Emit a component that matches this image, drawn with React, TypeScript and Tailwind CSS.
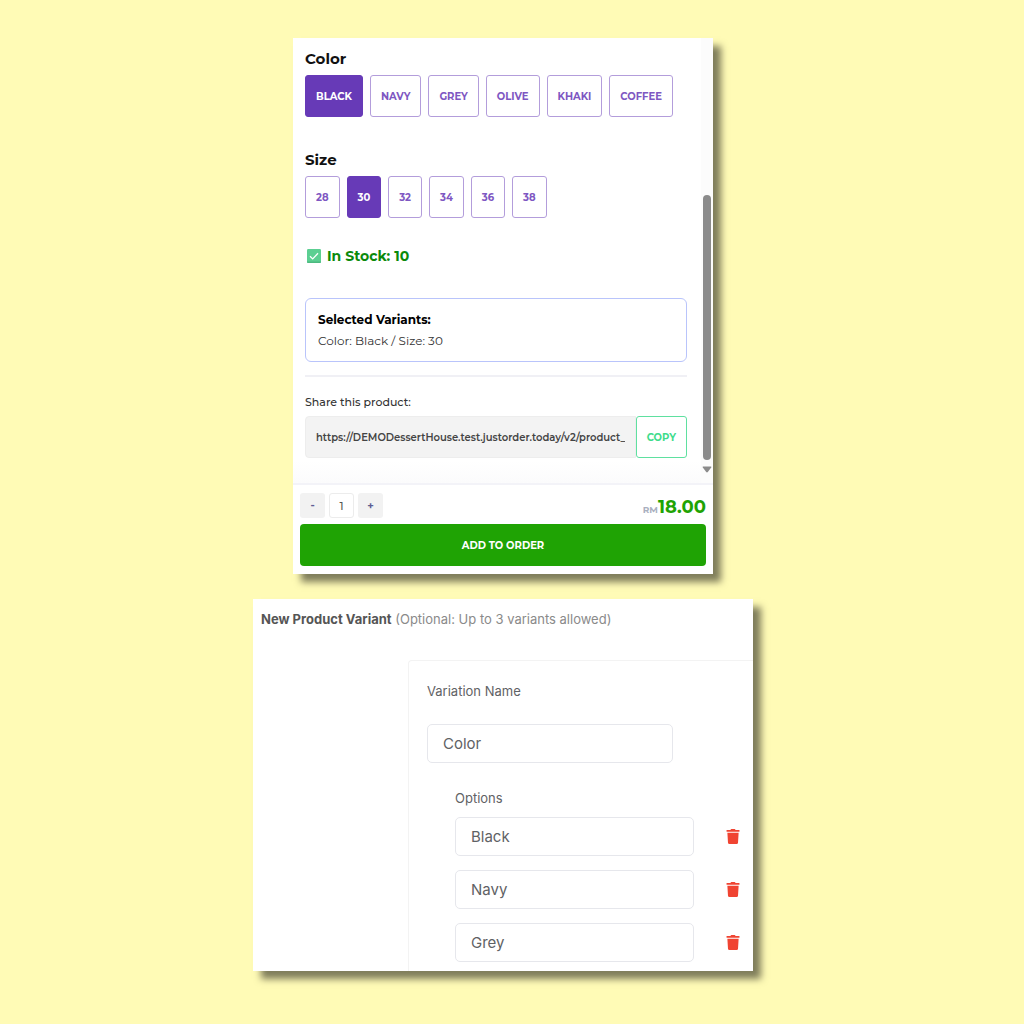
import { useState } from 'react';
import { FaTrash } from 'react-icons/fa';

const COLORS = ['Black', 'Navy', 'Grey', 'Olive', 'Khaki', 'Coffee'];
const SIZES = ['28', '30', '32', '34', '36', '38'];

type OptionGroupProps = {
  title: string;
  options: string[];
  selected: string;
  onSelect: (option: string) => void;
};

function OptionGroup({ title, options, selected, onSelect }: OptionGroupProps) {
  return (
    <section>
      <h2 className="text-[15px] leading-6 font-bold text-[#111111]">{title}</h2>
      <div className="mt-1 flex flex-wrap gap-[7px]">
        {options.map((option) => (
          <button
            key={option}
            type="button"
            aria-pressed={option === selected}
            onClick={() => onSelect(option)}
            className={`h-[42px] rounded-[3px] border px-2.5 text-[10px] font-bold uppercase ${
              option === selected
                ? 'border-[#673ab7] bg-[#673ab7] text-white'
                : 'border-[#b39ddb] bg-white text-[#7e57c2]'
            }`}
          >
            {option}
          </button>
        ))}
      </div>
    </section>
  );
}

function Scrollbar() {
  return (
    <div className="flex w-3 flex-col items-center bg-[#fcfcfc] pt-[157px] pb-2.5">
      <div className="w-2 flex-1 rounded-full bg-[#8b8b8b]" />
      <svg viewBox="0 0 10 7" className="mt-1.5 h-[7px] w-2.5" fill="#8b8b8b">
        <path d="M1.2 0.5h7.6q1 0 .4.9L5.8 6.1q-.8.9-1.6 0L.8 1.4Q.2.5 1.2.5z" />
      </svg>
    </div>
  );
}

function ProductCard() {
  const [color, setColor] = useState('Black');
  const [size, setSize] = useState('30');
  const [quantity, setQuantity] = useState(1);

  return (
    <div className="w-full max-w-[420px] bg-white font-[Montserrat,Inter,sans-serif] shadow-[8px_8px_7px_rgba(0,0,0,0.5)]">
      <div className="flex border-b-2 border-[#f3f3f8]">
        <div className="min-w-0 flex-1 bg-linear-to-t from-[#fbfbfc] via-white via-5% to-white pt-[9px] pr-3.5 pb-[25px] pl-3">
          <OptionGroup title="Color" options={COLORS} selected={color} onSelect={setColor} />
          <div className="mt-[31px]">
            <OptionGroup title="Size" options={SIZES} selected={size} onSelect={setSize} />
          </div>

          <p className="mt-7 flex items-center gap-1.5 pl-0.5 text-sm leading-5 font-bold text-[#0b8a0b]">
            <svg viewBox="0 0 14 14" className="h-3.5 w-3.5">
              <rect width="14" height="14" rx="1.2" fill="#5ccf92" />
              <path d="M0 12.6h14v.2q0 1.2-1.2 1.2H1.2Q0 14 0 12.8z" fill="#4cba80" />
              <path d="M3 7.3l2.7 2.6L11 4.3" fill="none" stroke="#fff" strokeWidth="1.3" />
            </svg>
            In Stock: 10
          </p>

          <div className="mt-8 rounded-md border border-[#b9c4fb] px-3 py-2.5 text-xs leading-[21px]">
            <p className="font-bold text-black">Selected Variants:</p>
            <p className="text-[#333333]">
              Color: {color} / Size: {size}
            </p>
          </div>

          <hr className="mt-[13px] border-t-2 border-[#f0f0f5]" />

          <label
            htmlFor="share-url"
            className="mt-[15px] block text-[11px] leading-5 font-medium text-[#333333]"
          >
            Share this product:
          </label>
          <div className="mt-1 flex">
            <input
              id="share-url"
              type="text"
              readOnly
              value="https://DEMODessertHouse.test.justorder.today/v2/product_"
              className="h-[42px] min-w-0 flex-1 rounded-l border border-[#ededed] bg-[#f3f3f3] px-2.5 text-[10px] font-semibold text-[#444444] outline-none"
            />
            <button
              type="button"
              className="h-[42px] rounded-[3px] border border-[#5fe0a0] bg-white px-2.5 text-[10px] font-bold text-[#3fdc8c]"
            >
              COPY
            </button>
          </div>
        </div>
        <Scrollbar />
      </div>

      <div className="px-[7px] pt-2 pb-2">
        <div className="flex items-start justify-between">
          <div className="flex gap-1 text-[11px]">
            <button
              type="button"
              aria-label="Decrease quantity"
              onClick={() => setQuantity(Math.max(1, quantity - 1))}
              className="h-[25px] w-[25px] rounded-[3px] bg-[#f2f2f2] font-bold text-[#5e5e94]"
            >
              -
            </button>
            <input
              type="text"
              aria-label="Quantity"
              value={quantity}
              onChange={(e) => setQuantity(Number(e.target.value) || 1)}
              className="h-[25px] w-[25px] rounded-[3px] border border-[#ececec] text-center font-medium text-[#555555] outline-none"
            />
            <button
              type="button"
              aria-label="Increase quantity"
              onClick={() => setQuantity(quantity + 1)}
              className="h-[25px] w-[25px] rounded-[3px] bg-[#f2f2f2] font-bold text-[#5e5e94]"
            >
              +
            </button>
          </div>
          <p className="text-lg leading-7 font-bold text-[#1fa304]">
            <span className="text-[9px] font-bold text-[#a9b0bf]">RM</span>18.00
          </p>
        </div>
        <button
          type="button"
          className="h-[42px] w-full rounded bg-[#1fa304] text-[10px] font-bold text-white"
        >
          ADD TO ORDER
        </button>
      </div>
    </div>
  );
}

function VariantForm() {
  return (
    <form className="w-full max-w-[500px] bg-white pt-2.5 font-[Inter,sans-serif] text-[13px] leading-5 text-[#5f6265] shadow-[8px_8px_7px_rgba(0,0,0,0.5)]">
      <h2 className="px-2 text-[#8a8a8a]">
        <span className="font-bold text-[#555555]">New Product Variant</span> (Optional: Up to 3
        variants allowed)
      </h2>
      <div className="mt-[31px] ml-[155px] rounded-tl border-t border-l border-[#f3f3f3] pt-5 pr-[13px] pb-[9px] pl-[18px]">
        <label htmlFor="variation-name" className="block">
          Variation Name
        </label>
        <input
          id="variation-name"
          type="text"
          defaultValue="Color"
          className="mt-[23px] block h-[39px] w-[246px] rounded-[5px] border border-[#e6e7ec] px-[15px] text-[15px] outline-none"
        />
        <fieldset className="mt-[25px] ml-7">
          <legend>Options</legend>
          <div className="mt-[9px] flex flex-col gap-3.5">
            {COLORS.slice(0, 3).map((option) => (
              <div key={option} className="flex items-center justify-between">
                <input
                  type="text"
                  aria-label={`Option ${option}`}
                  defaultValue={option}
                  className="h-[39px] w-[239px] rounded-[5px] border border-[#e6e7ec] px-[15px] text-[15px] outline-none"
                />
                <button type="button" aria-label={`Delete ${option}`} className="text-[#f04432]">
                  <FaTrash className="h-[15px] w-3.5" />
                </button>
              </div>
            ))}
          </div>
        </fieldset>
      </div>
    </form>
  );
}

export default function App() {
  return (
    <main className="flex min-h-screen flex-col items-center gap-[25px] bg-[#fffbb6] pt-[38px] pr-[18px] pb-10">
      <ProductCard />
      <VariantForm />
    </main>
  );
}
